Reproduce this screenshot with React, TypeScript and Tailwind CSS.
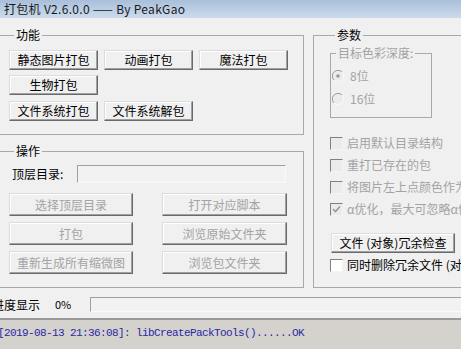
import React from 'react';

const FONT = { fontFamily: "'Noto Sans CJK SC', 'Noto Sans', sans-serif" };

interface BtnProps {
    children: React.ReactNode;
    disabled?: boolean;
    className?: string;
}

const Btn: React.FC<BtnProps> = ({ children, disabled, className = '' }) => (
    <button
        type="button"
        className={
            'flex items-center justify-center border border-t-[#dcdcdc] border-l-[#dcdcdc] border-r-[#6a6a6a] border-b-[#6a6a6a] bg-[#f0f0f0] shadow-[inset_-1px_-1px_0_#a0a0a0,inset_1px_1px_0_#ffffff] text-[12px] leading-none ' +
            (disabled ? 'text-[#a3a3a3] ' : 'text-black ') +
            className
        }
    >
        {children}
    </button>
);

const CheckBox: React.FC<{ label: string; checked?: boolean; disabled?: boolean }> = ({ label, checked, disabled }) => (
    <div className="flex items-center h-[16px] ml-[17px] gap-[4px] whitespace-nowrap">
        <div
            className={
                'w-[13px] h-[13px] shrink-0 border border-t-[#808080] border-l-[#808080] border-r-[#f4f4f4] border-b-[#f4f4f4] flex items-center justify-center ' +
                (disabled ? 'bg-[#ebebeb]' : 'bg-white')
            }
        >
            {checked && (
                <svg width="9" height="9" viewBox="0 0 9 9">
                    <path d="M1 4 L3.5 6.5 L8 1.5" fill="none" stroke={disabled ? '#9a9a9a' : '#000'} strokeWidth="1.6" />
                </svg>
            )}
        </div>
        <span className={'text-[12px] leading-none ' + (disabled ? 'text-[#a3a3a3]' : 'text-black')}>{label}</span>
    </div>
);

const Radio: React.FC<{ label: string; checked?: boolean }> = ({ label, checked }) => (
    <div className="flex items-center h-[16px] ml-[17px] gap-[6px]">
        <svg width="12" height="12" viewBox="0 0 12 12">
            <path d="M10 2 A5.5 5.5 0 0 0 2 10" fill="none" stroke="#9a9a9a" strokeWidth="1" />
            <path d="M10 2 A5.5 5.5 0 0 1 2 10" fill="none" stroke="#f8f8f8" strokeWidth="1" />
            <circle cx="6" cy="6" r="4.6" fill="#ececec" />
            {checked && <circle cx="6" cy="6" r="1.8" fill="#9a9a9a" />}
        </svg>
        <span className="text-[12px] leading-none text-[#a3a3a3]">{label}</span>
    </div>
);

export default function App() {
    return (
        <div className="w-[461px] h-[349px] overflow-hidden bg-[#f0f0f0] flex flex-col" style={FONT}>
            {/* title bar */}
            <div className="h-[18px] shrink-0 bg-gradient-to-b from-[#a8bfda] to-[#cddcec] pl-[4px] text-[12px] leading-[17px] tracking-[0.3px] text-[#1a1a1a] whitespace-nowrap">
                打包机 V2.6.0.0 —— By PeakGao
            </div>

            <div className="flex ml-[-6px] mt-[10px] shrink-0">
                <div className="flex flex-col w-[310px] shrink-0 gap-[9px]">
                    <fieldset className="h-[107px] border border-[#a8a8a8] pl-[14px] pt-[8px]">
                        <legend className="ml-[5px] px-[2px] text-[12px] leading-[14px]">功能</legend>
                        <div className="flex flex-col gap-[5px]">
                            <div className="flex gap-[6px]">
                                <Btn className="w-[89px] h-[20px]">静态图片打包</Btn>
                                <Btn className="w-[89px] h-[20px]">动画打包</Btn>
                                <Btn className="w-[89px] h-[20px]">魔法打包</Btn>
                            </div>
                            <Btn className="w-[89px] h-[20px]">生物打包</Btn>
                            <div className="flex gap-[6px] mt-[1px]">
                                <Btn className="w-[89px] h-[20px]">文件系统打包</Btn>
                                <Btn className="w-[89px] h-[20px]">文件系统解包</Btn>
                            </div>
                        </div>
                    </fieldset>

                    <fieldset className="h-[144px] border border-[#a8a8a8] pl-[14px] pt-[7px]">
                        <legend className="ml-[5px] px-[2px] text-[12px] leading-[14px]">操作</legend>
                        <div className="flex items-center h-[18px]">
                            <span className="ml-[3px] w-[65px] text-[12px] leading-none">顶层目录:</span>
                            <div className="w-[209px] h-[18px] border border-t-[#a0a0a0] border-l-[#a0a0a0] border-r-[#fafafa] border-b-[#fafafa] bg-[#f2f2f2]" />
                        </div>
                        <div className="grid grid-cols-[124px_125px] gap-x-[29px] gap-y-[6px] mt-[10px]">
                            <Btn disabled className="h-[23px]">选择顶层目录</Btn>
                            <Btn disabled className="h-[23px]">打开对应脚本</Btn>
                            <Btn disabled className="h-[23px]">打包</Btn>
                            <Btn disabled className="h-[23px]">浏览原始文件夹</Btn>
                            <Btn disabled className="h-[23px]">重新生成所有缩微图</Btn>
                            <Btn disabled className="h-[23px]">浏览包文件夹</Btn>
                        </div>
                    </fieldset>
                </div>

                <fieldset className="ml-[9px] w-[170px] h-[260px] shrink-0 border border-[#a8a8a8] pl-[16px] pt-[4px] min-w-0">
                    <legend className="ml-[5px] px-[2px] text-[12px] leading-[14px]">参数</legend>
                    <fieldset className="w-[102px] h-[72px] border border-[#a8a8a8] pt-[8px]">
                        <legend className="ml-[5px] px-[2px] text-[12px] leading-[14px] text-[#a3a3a3] whitespace-nowrap">目标色彩深度:</legend>
                        <div className="flex flex-col gap-[7px] ml-[-16px]">
                            <Radio label="8位" checked />
                            <Radio label="16位" />
                        </div>
                    </fieldset>
                    <div className="flex flex-col gap-[6px] mt-[17px] ml-[-17px] mr-[-40px]">
                        <CheckBox label="启用默认目录结构" disabled />
                        <CheckBox label="重打已存在的包" disabled />
                        <CheckBox label="将图片左上点颜色作为透明色" disabled />
                        <CheckBox label="α优化，最大可忽略α值" checked disabled />
                    </div>
                    <Btn className="w-[124px] h-[20px] mt-[16px] ml-[1px]">文件 (对象)冗余检查</Btn>
                    <div className="mt-[4px] ml-[-17px] mr-[-40px]">
                        <CheckBox label="同时删除冗余文件 (对象)" />
                    </div>
                </fieldset>
            </div>

            {/* progress */}
            <div className="flex items-center h-[15px] mt-[9px] shrink-0">
                <span className="ml-[-8px] w-[63px] text-[12px] leading-none whitespace-nowrap">进度显示</span>
                <span className="w-[35px] text-[11px] leading-none">0%</span>
                <div className="flex-1 h-[15px] border border-t-[#a0a0a0] border-l-[#a0a0a0] border-r-0 border-b-[#fafafa] bg-[#f2f2f2]" />
            </div>

            {/* log */}
            <div className="flex-1 mt-[6px] border-t-2 border-t-[#9a9a9a] bg-[#d5d2cd] pt-[6px]">
                <div
                    className="ml-[-2px] text-[11px] leading-[14px] tracking-[-0.6px] text-[#2828a6] whitespace-nowrap"
                    style={{ fontFamily: "'Liberation Mono', monospace" }}
                >
                    [2019-08-13 21:36:08]: libCreatePackTools()......OK
                </div>
            </div>
        </div>
    );
}
